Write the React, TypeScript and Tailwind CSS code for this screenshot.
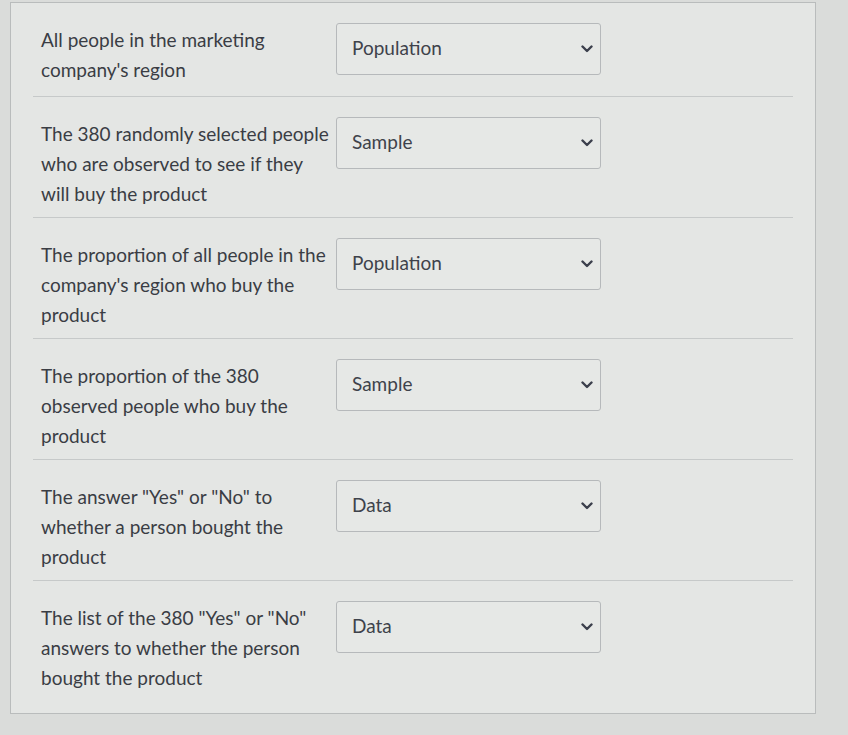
import React from "react";

type Row = { lines: string[]; value: string };

const rows: Row[] = [
  { lines: ["All people in the marketing", "company's region"], value: "Population" },
  {
    lines: ["The 380 randomly selected people", "who are observed to see if they", "will buy the product"],
    value: "Sample",
  },
  {
    lines: ["The proportion of all people in the", "company's region who buy the", "product"],
    value: "Population",
  },
  { lines: ["The proportion of the 380", "observed people who buy the", "product"], value: "Sample" },
  { lines: ['The answer "Yes" or "No" to', "whether a person bought the", "product"], value: "Data" },
  {
    lines: ['The list of the 380 "Yes" or "No"', "answers to whether the person", "bought the product"],
    value: "Data",
  },
];

function Chevron() {
  return (
    <svg width="12" height="8" viewBox="0 0 12 8" fill="none">
      <path d="M1.5 1.5 L6 6 L10.5 1.5" stroke="#3b3f4c" strokeWidth="2.4" strokeLinecap="round" strokeLinejoin="round" />
    </svg>
  );
}

export default function App() {
  return (
    <div
      className="w-[848px] h-[735px] overflow-hidden bg-[#dadcda]"
      style={{ fontFamily: "Lato, 'Open Sans', Arial, sans-serif" }}
    >
      <div className="ml-[10px] mt-[2px] w-[806px] bg-[#e4e6e4] border border-[#b9bcbc] px-[22px] pb-[12px]">
        {rows.map((r, i) => (
          <div
            key={i}
            className={
              "flex gap-[3px] pl-[8px] pt-[22px] pb-[8px] min-h-[94px] " +
              (i < rows.length - 1 ? "border-b border-[#c6c9c9]" : "")
            }
          >
            <div className="w-[292px] text-[19px] leading-[30px] text-[#3a3d44]">
              {r.lines.map((l, j) => (
                <div key={j} className="whitespace-nowrap">
                  {l}
                </div>
              ))}
            </div>
            <div className="-mt-[2px] w-[265px] h-[52px] border border-[#b6b9bb] rounded-[3px] flex items-center justify-between pl-[15px] pr-[7px] text-[19px] text-[#3e424b] bg-[#e6e8e6]">
              <span className="-mt-[2px]">{r.value}</span>
              <Chevron />
            </div>
          </div>
        ))}
      </div>
    </div>
  );
}
